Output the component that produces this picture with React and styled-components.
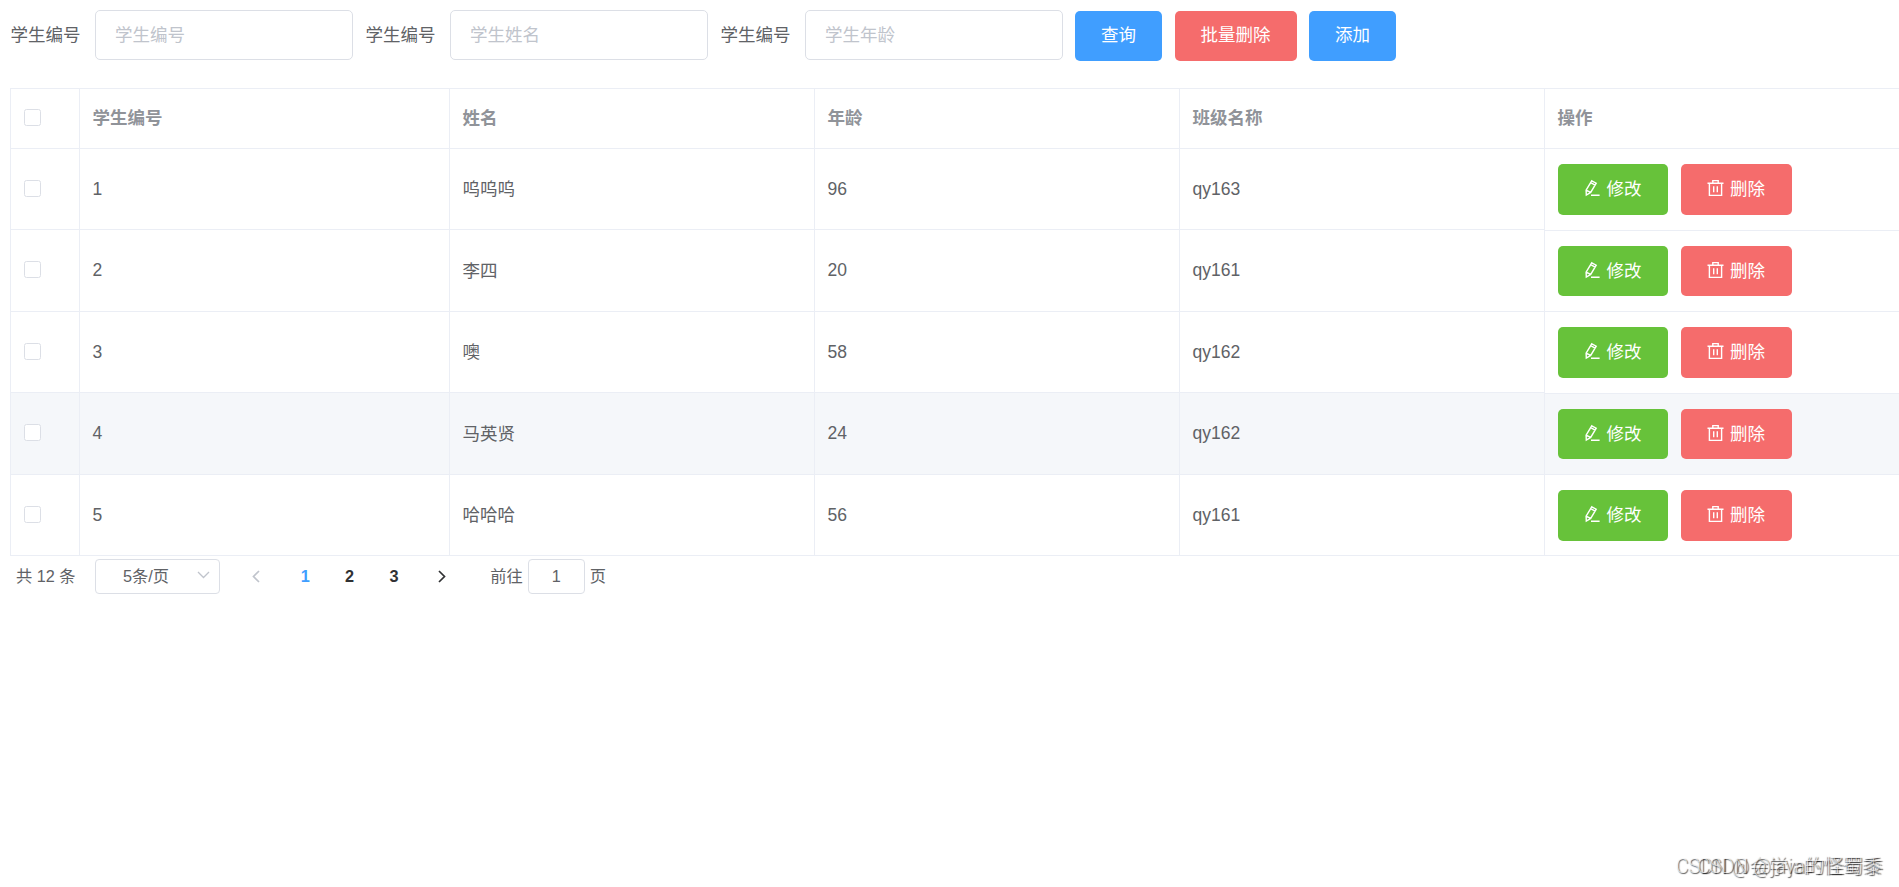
import React from "react";
import styled, { createGlobalStyle } from "styled-components";

const colors = {
  primary: "#409eff",
  success: "#67c23a",
  danger: "#f56c6c",
  text: "#606266",
  heading: "#909399",
  dark: "#303133",
  placeholder: "#c0c4cc",
  border: "#dcdfe6",
  line: "#ebeef5",
  hover: "#f5f7fa",
};

const GlobalStyle = createGlobalStyle`
  * {
    box-sizing: border-box;
  }
  body {
    margin: 0;
    background: #fff;
    color: ${colors.text};
    font-family: "Liberation Sans", "Noto Sans CJK SC", sans-serif;
    font-size: 17.5px;
    overflow: hidden;
  }
  input, button {
    font: inherit;
  }
`;

const Page = styled.div`
  height: 887px;
  padding: 10px 0 0 10px;
  display: flex;
  flex-direction: column;
  overflow: hidden;
`;

const Toolbar = styled.form`
  display: flex;
  height: 78px;
  align-items: flex-start;
`;

const Field = styled.label`
  display: flex;
  width: 355px;
  line-height: 50px;
  white-space: nowrap;
`;

const FieldName = styled.span`
  width: 85px;
  height: 50px;
  padding-left: 0.5px;
`;

const FieldInput = styled.input`
  width: 258px;
  height: 50px;
  padding: 0 19px 1px;
  border: 1px solid ${colors.border};
  border-radius: 5px;
  outline: none;
  color: ${colors.text};
  &::placeholder {
    color: ${colors.placeholder};
  }
`;

const Actions = styled.div`
  display: flex;
  gap: 12.5px;
  padding-top: 1px;
`;

const Button = styled.button`
  display: flex;
  align-items: center;
  justify-content: center;
  width: ${props => props.$width}px;
  height: ${props => props.$height || 50}px;
  padding: 0 0 6px;
  border: 0;
  border-radius: 5px;
  color: #fff;
  background: ${props => colors[props.$type]};
  white-space: nowrap;
`;

const RowButton = styled(Button)`
  padding-bottom: 4px;
  svg {
    margin: 1px 6px 0 0;
  }
`;

const Table = styled.div`
  border-top: 1px solid ${colors.line};
  border-left: 1px solid ${colors.line};
`;

const Row = styled.div`
  display: grid;
  grid-template-columns: 69px 370px 365px 365px 365px 1fr;
  height: ${props => props.$height}px;
  background: ${props => (props.$active ? colors.hover : "#fff")};
`;

const Cell = styled.div`
  display: flex;
  align-items: center;
  padding: 0 12.5px;
  border-right: 1px solid ${colors.line};
  border-bottom: 1px solid ${colors.line};
  &:last-child {
    border-right: 0;
  }
`;

const HeadCell = styled(Cell)`
  padding-bottom: 4px;
  color: ${colors.heading};
  font-weight: bold;
`;

const CheckCell = styled(Cell)`
  padding-bottom: 2px;
`;

const NameCell = styled(Cell)`
  padding-bottom: 3px;
`;

const ActionCell = styled(Cell)`
  position: relative;
  align-items: flex-start;
  gap: 13px;
  padding-top: ${props => props.$top}px;
  margin-bottom: ${props => (props.$low ? -1 : 0)}px;
`;

const Checkbox = styled.span`
  width: 17px;
  height: 17px;
  border: 1px solid ${colors.border};
  border-radius: 2.5px;
  background: #fff;
`;

const Pagination = styled.div`
  display: flex;
  align-items: center;
  height: 35px;
  margin-top: 3px;
  padding-left: 6px;
  font-size: 16.25px;
  white-space: nowrap;
`;

const Total = styled.span`
  width: 79px;
  padding-bottom: 3px;
`;

const PageSize = styled.div`
  display: flex;
  align-items: center;
  justify-content: space-between;
  width: 125px;
  height: 35px;
  padding: 0 9px 3px 27px;
  border: 1px solid ${colors.border};
  border-radius: 4px;
`;

const Arrow = styled.span`
  display: flex;
  justify-content: center;
  width: ${props => props.$width}px;
  color: ${props => (props.$disabled ? colors.placeholder : colors.dark)};
`;

const PrevArrow = styled(Arrow)`
  padding-left: 8px;
`;

const PageNumber = styled.span`
  width: 44.4px;
  text-align: center;
  font-weight: bold;
  color: ${props => (props.$active ? colors.primary : colors.dark)};
`;

const Jump = styled.label`
  display: flex;
  align-items: center;
  gap: 5px;
  margin-left: 22px;
`;

const JumpText = styled.span`
  padding-bottom: 3px;
`;

const JumpInput = styled.input`
  width: 57px;
  height: 35px;
  padding: 0;
  border: 1px solid ${colors.border};
  border-radius: 4px;
  color: ${colors.text};
  text-align: center;
`;

const Watermark = styled.div`
  position: absolute;
  right: ${props => props.$right}px;
  bottom: 7px;
  color: rgba(255, 255, 255, 0.65);
  font-family: Roboto, "Noto Sans CJK SC", sans-serif;
  font-size: 19.5px;
  font-weight: 300;
  line-height: 26px;
  white-space: nowrap;
  text-shadow: 1px 1px 1px rgba(0, 0, 0, 0.65);
`;

const EditIcon = () => (
  <svg width="17" height="18" viewBox="0 0 17 18" fill="none" stroke="currentColor" strokeWidth="1.4">
    <path d="M7.8 1.8l4.4 2.4-5.5 9.2-4.4 2.7-.2-5zM6.7 3.7l4.4 2.4M2.1 11.1l4.6 2.3M7 16.3h8.6" />
  </svg>
);

const DeleteIcon = () => (
  <svg width="17" height="18" viewBox="0 0 17 18" fill="none" stroke="currentColor" strokeWidth="1.4">
    <path d="M.5 4.2h16M5.8 4V1.6h5.4V4M2.4 4.2v12.2h12.2V4.2M6.7 7.2v6M10.3 7.2v6" />
  </svg>
);

const Chevron = ({ d, width, height, stroke = 1.7 }) => (
  <svg width={width} height={height} viewBox={`0 0 ${width} ${height}`} fill="none" stroke="currentColor" strokeWidth={stroke}>
    <path d={d} />
  </svg>
);

const fields = [
  { label: "学生编号", placeholder: "学生编号" },
  { label: "学生编号", placeholder: "学生姓名" },
  { label: "学生编号", placeholder: "学生年龄" },
];

const students = [
  { id: 1, name: "呜呜呜", age: 96, className: "qy163", height: 81, top: 15, button: 51, low: true },
  { id: 2, name: "李四", age: 20, className: "qy161", height: 82, top: 16, button: 50 },
  { id: 3, name: "噢", age: 58, className: "qy162", height: 81, top: 15, button: 51, low: true },
  { id: 4, name: "马英贤", age: 24, className: "qy162", height: 82, top: 16, button: 50, active: true },
  { id: 5, name: "哈哈哈", age: 56, className: "qy161", height: 81, top: 15, button: 51 },
];

const StudentRow = ({ student }) => (
  <Row $height={student.height} $active={student.active}>
    <CheckCell>
      <Checkbox />
    </CheckCell>
    <Cell>{student.id}</Cell>
    <NameCell>{student.name}</NameCell>
    <Cell>{student.age}</Cell>
    <Cell>{student.className}</Cell>
    <ActionCell $top={student.top} $low={student.low}>
      <RowButton type="button" $type="success" $width={110} $height={student.button}>
        <EditIcon />
        修改
      </RowButton>
      <RowButton type="button" $type="danger" $width={111} $height={student.button}>
        <DeleteIcon />
        删除
      </RowButton>
    </ActionCell>
  </Row>
);

export default function App() {
  return (
    <Page>
      <GlobalStyle />
      <Toolbar>
        {fields.map(field => (
          <Field key={field.placeholder}>
            <FieldName>{field.label}</FieldName>
            <FieldInput placeholder={field.placeholder} />
          </Field>
        ))}
        <Actions>
          <Button type="button" $type="primary" $width={87}>
            查询
          </Button>
          <Button type="button" $type="danger" $width={122}>
            批量删除
          </Button>
          <Button type="button" $type="primary" $width={87}>
            添加
          </Button>
        </Actions>
      </Toolbar>
      <Table>
        <Row $height={60}>
          <CheckCell>
            <Checkbox />
          </CheckCell>
          <HeadCell>学生编号</HeadCell>
          <HeadCell>姓名</HeadCell>
          <HeadCell>年龄</HeadCell>
          <HeadCell>班级名称</HeadCell>
          <HeadCell>操作</HeadCell>
        </Row>
        {students.map(student => (
          <StudentRow key={student.id} student={student} />
        ))}
      </Table>
      <Pagination>
        <Total>共 12 条</Total>
        <PageSize>
          5条/页
          <Arrow $width={13} $disabled>
            <Chevron width={13} height={8} stroke={1.3} d="M1 1l5.5 5.5L12 1" />
          </Arrow>
        </PageSize>
        <PrevArrow $width={63} $disabled>
          <Chevron width={8} height={13} d="M7 1L1.5 6.5 7 12" />
        </PrevArrow>
        <PageNumber $active>1</PageNumber>
        <PageNumber>2</PageNumber>
        <PageNumber>3</PageNumber>
        <Arrow $width={52}>
          <Chevron width={8} height={13} d="M1 1l5.5 5.5L1 12" />
        </Arrow>
        <Jump>
          <JumpText>前往</JumpText>
          <JumpInput defaultValue="1" />
          <JumpText>页</JumpText>
        </Jump>
      </Pagination>
      <Watermark $right={18}>CSDN @会学ja的怪蜀黍</Watermark>
      <Watermark $right={16}>CSDN @java的怪蜀黍</Watermark>
    </Page>
  );
}
